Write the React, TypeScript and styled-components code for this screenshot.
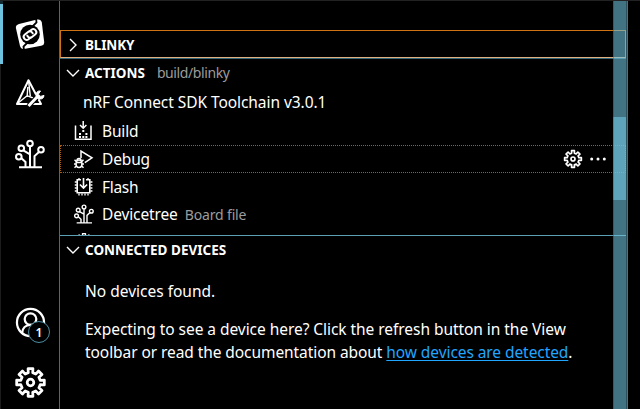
import React from "react";
import styled, { createGlobalStyle } from "styled-components";

const Global = createGlobalStyle`
  * { box-sizing: border-box; }
  body { margin: 0; background: #000; overflow: hidden; }
`;

const Shell = styled.div`
  display: flex;
  width: 640px;
  height: 409px;
  overflow: hidden;
  background: #000;
  color: #fff;
  font-family: "Noto Sans", sans-serif;
  font-size: 15.5px;
  border-top: 1px solid #222;
`;

const ActivityBar = styled.nav`
  display: flex;
  flex-direction: column;
  flex: none;
  width: 60px;
  border-left: 1px solid #1c1c1c;
  border-right: 1px solid #3d7080;
`;

const Activity = styled.div<{ $active?: boolean }>`
  position: relative;
  display: flex;
  flex: none;
  align-items: center;
  justify-content: center;
  height: 60px;
  margin-left: -1px;
  border-left: 3px solid ${(p) => (p.$active ? "#6fc3df" : "transparent")};
  padding-right: 2px;
  svg { display: block; }
`;

const TopGap = styled.div`
  height: 3px;
  margin-left: -1px;
  border-left: 3px solid #102830;
`;

const Spacer = styled.div`
  flex: 1;
`;

const BottomGroup = styled.div`
  margin-bottom: -3px;
`;

const Badge = styled.span`
  position: absolute;
  left: 25px;
  top: 29px;
  display: flex;
  align-items: center;
  justify-content: center;
  width: 22px;
  height: 22px;
  border: 1px solid #4d8ea3;
  border-radius: 50%;
  background: #000;
  font-size: 12px;
  font-weight: 600;
`;

const SideBar = styled.main`
  display: flex;
  flex-direction: column;
  flex: none;
  width: 566px;
`;

const TopSpace = styled.div`
  flex: none;
  height: 29px;
`;

const SectionHeader = styled.header<{ $focused?: boolean; $divider?: boolean }>`
  display: flex;
  flex: none;
  align-items: center;
  height: ${(p) => (p.$focused ? 28 : 27)}px;
  padding-left: ${(p) => (p.$focused ? 5 : 6)}px;
  ${(p) => p.$focused && "border: 1px solid #d07312; border-bottom-color: #e0b080; padding-top: 1px;"}
  ${(p) => p.$divider && "border-top: 1px solid #5ca0b5; height: 29px;"}
  svg { width: 14px; height: 14px; margin-right: 5px; flex: none; }
`;

const ActionsDivider = styled.div`
  flex: none;
  height: 1px;
  background: #356575;
`;

const Title = styled.h2<{ $track?: number }>`
  margin: 0;
  font-size: 13.5px;
  line-height: 20px;
  font-weight: 700;
  white-space: pre;
  letter-spacing: ${(p) => p.$track ?? 0}px;
`;

const Muted = styled.span<{ $gap: number; $track?: number }>`
  margin-left: ${(p) => p.$gap}px;
  color: #9c9c9c;
  font-size: 14px;
  white-space: pre;
  letter-spacing: ${(p) => p.$track ?? 0}px;
`;

const Tree = styled.section`
  flex: none;
  height: 149px;
  overflow: hidden;
`;

const TreeRow = styled.div<{ $root?: boolean; $hover?: boolean }>`
  display: flex;
  align-items: center;
  height: ${(p) => (p.$root ? 31 : p.$hover ? 28 : 27.5)}px;
  padding: 1px 0 ${(p) => (p.$root ? 1 : 0)}px ${(p) => (p.$root ? 23 : p.$hover ? 13 : 14)}px;
  ${(p) => p.$hover && "border: 1px dotted #a85c0c;"}
`;

const Label = styled.span<{ $track?: number }>`
  white-space: pre;
  letter-spacing: ${(p) => p.$track ?? -0.05}px;
`;

const RowIcon = styled.span`
  display: flex;
  width: 20px;
  height: 20px;
  margin-right: 8px;
`;

const Tools = styled.span`
  display: flex;
  align-items: center;
  gap: 6px;
  margin-left: auto;
  margin-right: 18px;
`;

const Notice = styled.div`
  padding: 16px 0 0 25px;
`;

const Para = styled.p`
  margin: 0 0 15px;
  line-height: 23px;
`;

const Line = styled.span<{ $track?: number }>`
  display: block;
  white-space: pre;
  letter-spacing: ${(p) => p.$track ?? 0}px;
`;

const Link = styled.a`
  color: #21a6ff;
  text-decoration: underline;
  text-decoration-thickness: 1px;
  text-underline-offset: 2px;
`;

const Rail = styled.div`
  position: relative;
  display: flex;
  flex: none;
  flex-direction: column;
  width: 13px;
  margin-left: -13px;
  padding-top: 116px;
  background: rgba(111, 195, 223, 0.59);
  box-shadow: inset 1px 0 rgba(0, 0, 0, 0.2);
`;

const Thumb = styled.div`
  height: 83px;
  background: rgba(111, 195, 223, 0.6);
  box-shadow: inset 1px 0 rgba(0, 0, 0, 0.15);
`;

const Edge = styled.div`
  flex: none;
  width: 2px;
  background: #2b4f5b;
  border-right: 1px solid #41788a;
`;

const Chevron = ({ open }: { open?: boolean }) => (
  <svg viewBox="0 0 14 14" fill="none" stroke="#fff" strokeWidth="1.4">
    <path d={open ? "M1 4l6 6 6-6" : "M4 1l6 6-6 6"} />
  </svg>
);

const teeth = Array.from({ length: 8 }, (_, i) => {
  const at = (radius: number, degrees: number) => {
    const a = ((degrees + i * 45) * Math.PI) / 180;
    return `${(12 + radius * Math.sin(a)).toFixed(2)} ${(12 - radius * Math.cos(a)).toFixed(2)}`;
  };
  return `${at(7.2, -13)}L${at(10.2, -10)}L${at(10.2, 10)}L${at(7.2, 13)}`;
});
const gearOutline = `M${teeth.join("L")}Z`;

const Gear = ({ size, weight = 1.7 }: { size: number; weight?: number }) => (
  <svg width={size} height={size} viewBox="0 0 24 24" fill="none" stroke="#fff" strokeWidth={weight}>
    <path d={gearOutline} strokeLinejoin="round" />
    <circle cx="12" cy="12" r="2.4" />
  </svg>
);

const Nodes = ({ size, weight = 2 }: { size: number; weight?: number }) => (
  <svg width={size} height={size} viewBox="0 0 30 30" fill="none" stroke="#fff" strokeWidth={weight}>
    <circle cx="15" cy="4.5" r="2.8" />
    <circle cx="6.3" cy="9.2" r="2.8" />
    <circle cx="26" cy="10.8" r="2.8" />
    <circle cx="3.8" cy="17.8" r="2.8" />
    <path d="M4 28.3h23M15 7.5v20.5M8.3 11.3l6.7 4M6.4 19.2l4.1 3.8v5M24 12.9l-4.5 4.2v11" />
  </svg>
);

const ConnectLogo = () => (
  <svg width="30" height="32" viewBox="0 0 30 32" fill="none">
    <path d="M4 6L22 1.6Q26 1 26.8 4.5L29.2 24Q29.4 27 26.2 27.8L9 31Q6 31.4 5 28L.9 10Q.5 7 4 6Z" fill="#fff" />
    <circle cx="15" cy="16.5" r="9.8" fill="#000" />
    <path d="M17 9L21.5 4.5L21 0M13 24L8.5 28.5L9 32" stroke="#000" strokeWidth="1.8" />
    <g transform="rotate(-38 15 16.5)" stroke="#fff" strokeWidth="2">
      <path d="M14 19.3h-3a3 3 0 0 1 0-6h4a3 3 0 0 1 2.4 4.8" />
      <path d="M16 13.7h3a3 3 0 0 1 0 6h-4a3 3 0 0 1-2.4-4.8" />
    </g>
  </svg>
);

const CMakeTools = () => (
  <svg width="30" height="30" viewBox="0 0 30 30" fill="none" stroke="#fff">
    <path d="M13.5 1.2L2 25h24Z" strokeWidth="2" strokeLinejoin="round" />
    <path d="M13.5 1.2l1.8 16M2.5 24.5l9.6-7.8 6 2.3M12.8 8l-.7 10" strokeWidth="1.4" />
    <path d="M13.5 27L23.5 16.5" stroke="#000" strokeWidth="5" />
    <path d="M13.5 27L23.5 16.5" strokeWidth="3" />
    <path d="M25.5 12a4 4 0 1 0 3.5 4.4l-3.4 1-2.2-2.2Z" fill="#fff" />
  </svg>
);

const Account = () => (
  <svg width="31" height="31" viewBox="0 0 32 32" fill="none" stroke="#fff" strokeWidth="2.3">
    <circle cx="16" cy="16" r="14" />
    <circle cx="16" cy="12.5" r="6" />
    <path d="M7.3 27c.4-5.3 3.8-8.5 8.7-8.5s8.3 3.2 8.7 8.5" />
  </svg>
);

const BuildIcon = () => (
  <svg width="20" height="20" viewBox="0 0 20 20" fill="none" stroke="#fff" strokeWidth="1.5">
    <path d="M1.5 4.5v13.8h15.5v-13.8M9.2 0v7M6 4l3.2 3.2L12.4 4" />
    <path d="M8.3 10h2M5 13h2M11.4 13h2M5 16h2M8.3 16h2M11.4 16h2" strokeWidth="1.8" />
  </svg>
);

const DebugIcon = () => (
  <svg width="20" height="20" viewBox="0 0 20 20" fill="none" stroke="#fff" strokeWidth="1.5">
    <path d="M7 9V2l11 6.8-7.2 4.9" />
    <ellipse cx="5" cy="14.7" rx="2.9" ry="3.8" />
    <path d="M3 11.4a2 2 0 0 1 4 0M2.2 13.5h5.6M0 15h2M8 15h2M.5 10.8l2 2M9.5 10.8l-2 2M.5 18.7l2-2M9.5 18.7l-2-2" />
  </svg>
);

const FlashIcon = () => (
  <svg width="20" height="20" viewBox="0 0 20 20" fill="none" stroke="#fff" strokeWidth="1.3">
    <path d="M7 2.8H3.2v13h12.6V2.8H12M9.5 1v10M5.9 7.5l3.6 3.6 3.6-3.6" strokeWidth="1.6" />
    <path d="M.8 5h2M.8 8h2M.8 11h2M.8 14h2M16.4 5h2M16.4 8h2M16.4 11h2M16.4 14h2M5 16.5v2M8 16.5v2M11 16.5v2M14 16.5v2M5 1v2M14 1v2" />
  </svg>
);

const Dots = () => (
  <svg width="18" height="18" viewBox="0 0 18 18" fill="#fff">
    <circle cx="2.7" cy="9" r="1.5" />
    <circle cx="9" cy="9" r="1.5" />
    <circle cx="15.3" cy="9" r="1.5" />
  </svg>
);

export default function App() {
  return (
    <>
      <Global />
      <Shell>
        <ActivityBar>
          <TopGap />
          <Activity $active><ConnectLogo /></Activity>
          <Activity><CMakeTools /></Activity>
          <Activity><Nodes size={30} /></Activity>
          <Spacer />
          <BottomGroup>
            <Activity>
              <Account />
              <Badge>1</Badge>
            </Activity>
            <Activity><Gear size={33} weight={2} /></Activity>
          </BottomGroup>
        </ActivityBar>
        <SideBar>
          <TopSpace />
          <SectionHeader $focused>
            <Chevron />
            <Title $track={-0.15}>BLINKY</Title>
          </SectionHeader>
          <ActionsDivider />
          <SectionHeader>
            <Chevron open />
            <Title>ACTIONS</Title>
            <Muted $gap={12} $track={-0.4}>build/blinky</Muted>
          </SectionHeader>
          <Tree>
            <TreeRow $root><Label $track={-0.06}>nRF Connect SDK Toolchain v3.0.1</Label></TreeRow>
            <TreeRow><RowIcon><BuildIcon /></RowIcon><Label $track={-0.15}>Build</Label></TreeRow>
            <TreeRow $hover>
              <RowIcon><DebugIcon /></RowIcon>
              <Label $track={-0.15}>Debug</Label>
              <Tools><Gear size={20} weight={2} /><Dots /></Tools>
            </TreeRow>
            <TreeRow><RowIcon><FlashIcon /></RowIcon><Label $track={-0.3}>Flash</Label></TreeRow>
            <TreeRow>
              <RowIcon><Nodes size={20} weight={2.1} /></RowIcon>
              <Label $track={-0.13}>Devicetree</Label>
              <Muted $gap={7} $track={-0.15}>Board file</Muted>
            </TreeRow>
            <TreeRow><RowIcon><Gear size={20} /></RowIcon></TreeRow>
          </Tree>
          <SectionHeader $divider>
            <Chevron open />
            <Title>CONNECTED DEVICES</Title>
          </SectionHeader>
          <Notice>
            <Para><Line>No devices found.</Line></Para>
            <Para>
              <Line $track={-0.05}>Expecting to see a device here? Click the refresh button in the View</Line>
              <Line $track={-0.075}>toolbar or read the documentation about <Link>how devices are detected</Link>.</Line>
            </Para>
          </Notice>
        </SideBar>
        <Rail><Thumb /></Rail>
        <Edge />
      </Shell>
    </>
  );
}
